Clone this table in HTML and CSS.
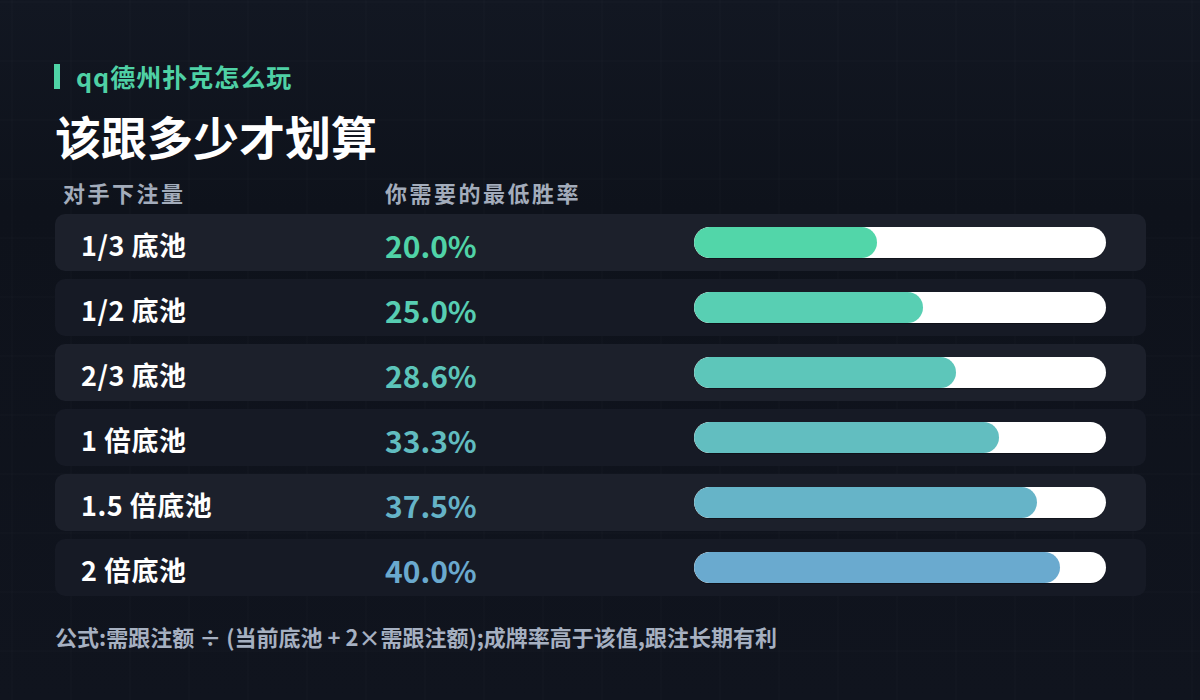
FILE: index.html
```html
<!DOCTYPE html>
<html lang="zh-CN">
<head>
<meta charset="utf-8">
<title>该跟多少才划算</title>
<link rel="stylesheet" href="styles.css">
</head>
<body>
<main class="page">
  <div class="kicker"><span class="kicker-bar"></span><span class="kicker-text">qq德州扑克怎么玩</span></div>
  <h1 class="title">该跟多少才划算</h1>
  <div class="head">
    <span>对手下注量</span>
    <span>你需要的最低胜率</span>
  </div>
  <div class="rows">
    <div class="row odd">
      <span class="label">1/3 底池</span>
      <span class="pct c1">20.0%</span>
      <div class="track"><div class="fill f1" style="width:44.4%"></div></div>
    </div>
    <div class="row even">
      <span class="label">1/2 底池</span>
      <span class="pct c2">25.0%</span>
      <div class="track"><div class="fill f2" style="width:55.6%"></div></div>
    </div>
    <div class="row odd">
      <span class="label">2/3 底池</span>
      <span class="pct c3">28.6%</span>
      <div class="track"><div class="fill f3" style="width:63.6%"></div></div>
    </div>
    <div class="row even">
      <span class="label">1 倍底池</span>
      <span class="pct c4">33.3%</span>
      <div class="track"><div class="fill f4" style="width:74.0%"></div></div>
    </div>
    <div class="row odd">
      <span class="label">1.5 倍底池</span>
      <span class="pct c5">37.5%</span>
      <div class="track"><div class="fill f5" style="width:83.3%"></div></div>
    </div>
    <div class="row even">
      <span class="label">2 倍底池</span>
      <span class="pct c6">40.0%</span>
      <div class="track"><div class="fill f6" style="width:88.9%"></div></div>
    </div>
  </div>
  <p class="note">公式:需跟注额 ÷ (当前底池 + 2×需跟注额);成牌率高于该值,跟注长期有利</p>
</main>
</body>
</html>
```
FILE: styles.css
```css
* { box-sizing: border-box; margin: 0; padding: 0; }
html, body { width: 1200px; height: 700px; overflow: hidden; }
body {
  background-color: #0f131c;
  background-image:
    linear-gradient(to right, rgba(255,255,255,0.008) 2px, transparent 2px),
    linear-gradient(to bottom, rgba(255,255,255,0.008) 2px, transparent 2px),
    linear-gradient(to bottom, #121722 0%, #0e121b 30%, #10141e 100%);
  background-size: 59px 59px, 59px 59px, 100% 100%;
  background-position: 11px 1px, 11px 1px, 0 0;
  font-family: "Noto Sans CJK SC", "Noto Sans", sans-serif;
  color: #fff;
}
.page {
  padding: 63px 54px 0 55px;
  display: flex;
  flex-direction: column;
}
.kicker {
  display: flex;
  align-items: center;
  height: 26px;
  gap: 16px;
}
.kicker-bar {
  width: 6px;
  height: 25px;
  background: #4fd4a6;
  margin-left: -1px;
}
.kicker-text {
  font-size: 25px;
  line-height: 26px;
  font-weight: 700;
  letter-spacing: 1px;
  color: #4fd1a5;
}
.title {
  margin-top: 22px;
  font-size: 46px;
  line-height: 48px;
  font-weight: 700;
  color: #ffffff;
}
.head {
  margin-top: 21px;
  height: 24px;
  display: grid;
  grid-template-columns: 322px 1fr;
  padding-left: 8px;
  font-size: 22px;
  line-height: 24px;
  font-weight: 600;
  letter-spacing: 2.5px;
  color: #a3acbb;
}
.rows {
  margin-top: 10px;
  display: flex;
  flex-direction: column;
  gap: 8px;
}
.row {
  height: 57px;
  border-radius: 10px;
  display: grid;
  grid-template-columns: 304px 309px 1fr;
  align-items: center;
  padding: 0 40px 0 26px;
}
.row.odd { background: #1c202b; }
.row.even { background: #161a25; }
.label {
  font-size: 27px;
  font-weight: 700;
  letter-spacing: 0.5px;
  color: #ffffff;
  line-height: 32px;
  padding-top: 4px;
}
.pct {
  font-size: 30px;
  font-weight: 600;
  letter-spacing: 0;
  line-height: 34px;
  padding-top: 4px;
}
.c1 { color: #50d3a7; }
.c2 { color: #57cdb2; }
.c3 { color: #5cc5ba; }
.c4 { color: #61bcc0; }
.c5 { color: #65b3c7; }
.c6 { color: #6aa9ce; }
.track {
  height: 31px;
  border-radius: 16px;
  background: #ffffff;
  overflow: hidden;
  box-shadow: 0 1px 0 rgba(0,0,0,0.35);
}
.fill { height: 100%; border-radius: 16px; }
.f1 { background: #52d6a9; }
.f2 { background: #58cfb3; }
.f3 { background: #5dc6ba; }
.f4 { background: #62bec0; }
.f5 { background: #66b4c8; }
.f6 { background: #6aaacf; }
.note {
  margin-top: 28px;
  font-size: 22px;
  line-height: 24px;
  font-weight: 600;
  letter-spacing: 0;
  color: #a6b0c1;
}
```
